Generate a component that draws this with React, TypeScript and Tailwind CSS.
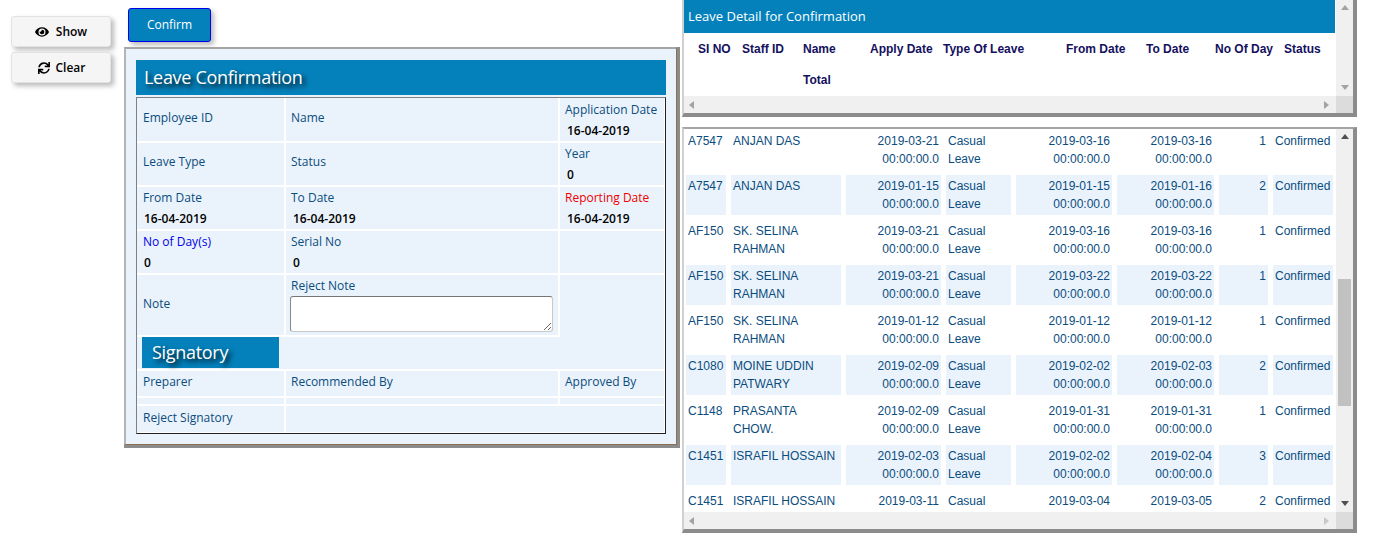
import { FaEye, FaSync } from "react-icons/fa";

const LEFT = "font-['Open_Sans','Noto_Sans',sans-serif]";
const INK = "text-[#0a4c7e]";

function Label({ children, className = INK }: { children: React.ReactNode; className?: string }) {
  return <div className={`h-[20px] leading-[20px] ${className}`}>{children}</div>;
}
function Value({ children, first }: { children: React.ReactNode; first?: boolean }) {
  return (
    <div className={`h-[20px] mt-[1px] leading-[20px] font-semibold text-black ${first ? "pl-[1px]" : "pl-[2px]"}`}>
      {children}
    </div>
  );
}
function Stack({ children, className = "" }: { children?: React.ReactNode; className?: string }) {
  return <div className={`bg-[#eaf3fb] pl-[5px] pt-[1px] ${className}`}>{children}</div>;
}
function Mid({ children, lift = "-mt-[3px]", className = "" }: { children: string; lift?: string; className?: string }) {
  return (
    <div className={`bg-[#eaf3fb] pl-[5px] flex items-center ${className}`}>
      <span className={`${lift} ${INK}`}>{children}</span>
    </div>
  );
}

function Arrow({ dir, color }: { dir: "up" | "down" | "left" | "right"; color: string }) {
  const pts = { up: "4,1 8,6 0,6", down: "0,1 8,1 4,6", left: "5,0 5,8 0,4", right: "0,0 0,8 5,4" }[dir];
  return (
    <svg width="8" height="8" viewBox="0 0 8 8" className="block">
      <polygon points={pts} fill={color} />
    </svg>
  );
}

function HScroll({ rightColor = "#a3a3a3" }: { rightColor?: string }) {
  return (
    <div className="flex h-[17px] bg-[#f0f0f0]">
      <div className="flex-1 flex items-center justify-between pl-[5px] pr-[4px]">
        <Arrow dir="left" color="#a3a3a3" />
        <Arrow dir="right" color={rightColor} />
      </div>
      <div className="w-[17px] bg-[#dcdcdc]" />
    </div>
  );
}

const rows = [
  ["A7547", "ANJAN DAS", "2019-03-21", "2019-03-16", "2019-03-16", "1"],
  ["A7547", "ANJAN DAS", "2019-01-15", "2019-01-15", "2019-01-16", "2"],
  ["AF150", "SK. SELINA\nRAHMAN", "2019-03-21", "2019-03-16", "2019-03-16", "1"],
  ["AF150", "SK. SELINA\nRAHMAN", "2019-03-21", "2019-03-22", "2019-03-22", "1"],
  ["AF150", "SK. SELINA\nRAHMAN", "2019-01-12", "2019-01-12", "2019-01-12", "1"],
  ["C1080", "MOINE UDDIN\nPATWARY", "2019-02-09", "2019-02-02", "2019-02-03", "2"],
  ["C1148", "PRASANTA\nCHOW.", "2019-02-09", "2019-01-31", "2019-01-31", "1"],
  ["C1451", "ISRAFIL HOSSAIN", "2019-02-03", "2019-02-02", "2019-02-04", "3"],
  ["C1451", "ISRAFIL HOSSAIN", "2019-03-11", "2019-03-04", "2019-03-05", "2"],
];

const headers = ["SI NO", "Staff ID", "Name", "Apply Date", "Type Of Leave", "From Date", "To Date", "No Of Day", "Status"];

const sideBtn =
  "w-[100px] h-[31px] flex items-center justify-center bg-[#f5f5f5] border border-[#e3e3e3] rounded-[3px] shadow-[3px_3px_5px_#bbbbbb] text-[12px] font-semibold text-black";

export default function App() {
  return (
    <div className="flex items-start w-[1379px] h-[546px] bg-white overflow-hidden">
      {/* Left action buttons */}
      <div className={`w-[124px] pl-[11px] pt-[16px] flex flex-col gap-[5px] ${LEFT}`}>
        <button className={`${sideBtn} gap-[7px]`}>
          <FaEye className="w-[14px] h-[14px]" />
          Show
        </button>
        <button className={`${sideBtn} gap-[5px]`}>
          <FaSync className="ml-[2px] w-[12px] h-[12px]" />
          Clear
        </button>
      </div>

      {/* Middle form */}
      <div className={`w-[556px] text-[12px] ${LEFT}`}>
        <button className="ml-[4px] mt-[8px] w-[83px] h-[34px] bg-[#0481bb] border border-[#0000ee] rounded-[3px] shadow-[3px_3px_5px_#bbbbbb] text-[12px] text-white block">
          Confirm
        </button>
        <div className="mt-[5px] w-[553px] h-[398px] bg-[#eaf3fb] border-l-2 border-t-2 border-l-[#b5b5b5] border-t-[#a5a5a5] border-r border-b border-r-[#8d6e50] border-b-[#8d6e50] shadow-[3px_3px_0_#8c8c8c,0_3px_0_#8c8c8c,3px_0_0_#8c8c8c] pl-[10px] pt-[11px]">
          <div className="w-[530px] h-[35px] bg-[#0481bb] flex items-center pl-[8px] text-[18px] tracking-[-0.3px] text-white [text-shadow:3px_3px_5px_#000000]">
            Leave Confirmation
          </div>
          <div className="mt-[2px] w-[530px] border border-t-[#808080] border-l-[#808080] border-r-[#222222] border-b-[#222222] bg-white pr-[1px] pb-[1px] grid grid-cols-[147px_272px_104px] grid-rows-[43px_42px_42px_42px_60px_32px_25px_6px_26px] gap-[2px]">
            <Mid className="!pl-[6px]">Employee ID</Mid>
            <Mid>Name</Mid>
            <Stack className="!pt-[2px]">
              <Label>Application Date</Label>
              <Value>16-04-2019</Value>
            </Stack>

            <Mid className="!pl-[6px]" lift="-mt-[5px]">Leave Type</Mid>
            <Mid lift="-mt-[5px]">Status</Mid>
            <Stack>
              <Label>Year</Label>
              <Value>0</Value>
            </Stack>

            <Stack className="!pl-[6px]">
              <Label>From Date</Label>
              <Value first>16-04-2019</Value>
            </Stack>
            <Stack>
              <Label>To Date</Label>
              <Value>16-04-2019</Value>
            </Stack>
            <Stack>
              <Label className="text-[#ee0000]">Reporting Date</Label>
              <Value>16-04-2019</Value>
            </Stack>

            <Stack className="!pl-[6px]">
              <Label className="text-[#0000ee]">No of Day(s)</Label>
              <Value first>0</Value>
            </Stack>
            <Stack>
              <Label>Serial No</Label>
              <Value>0</Value>
            </Stack>
            <Stack />

            <Mid className="!pl-[6px]">Note</Mid>
            <Stack className="!pl-[4px]">
              <div className="pl-[1px]">
                <Label>Reject Note</Label>
              </div>
              <textarea className="block w-[263px] h-[36px] bg-white border border-[#c8c8c8] border-t-[#767676] border-l-[#8a8a8a] rounded-[3px]" />
            </Stack>
            <div className="bg-[#eaf3fb] row-span-2" />

            <div className="bg-[#eaf3fb] pl-[5px] -mr-[2px]">
              <div className="w-[137px] h-[31px] bg-[#0481bb] flex items-center pl-[10px] text-[18px] tracking-[-0.3px] text-white [text-shadow:3px_3px_5px_#000000]">
                Signatory
              </div>
            </div>
            <div className="bg-[#eaf3fb] -mr-[2px]" />

            <Stack className="!pl-[6px]">
              <Label>Preparer</Label>
            </Stack>
            <Stack>
              <Label>Recommended By</Label>
            </Stack>
            <Stack>
              <Label>Approved By</Label>
            </Stack>

            <div className="bg-[#eaf3fb]" />
            <div className="bg-[#eaf3fb]" />
            <div className="bg-[#eaf3fb]" />

            <Stack className="!pl-[6px] !pt-[2px]">
              <Label>Reject Signatory</Label>
            </Stack>
            <div className="bg-[#eaf3fb] col-span-2" />
          </div>
        </div>
      </div>

      {/* Right panels */}
      <div className="ml-[2px] w-[675px] text-[12px] font-['Liberation_Sans',Arial,sans-serif]">
        <div className="h-[117px] border-l-2 border-l-[#d0d0d0] border-r-4 border-r-[#8c8c8c] border-b-4 border-b-[#8c8c8c] flex flex-col">
          <div className="flex h-[96px]">
            <div className="flex-1 min-w-0">
              <div className="h-[33px] mr-[1px] bg-[#0481bb] flex items-center pl-[4px] text-white text-[13px] font-medium font-['Open_Sans','Noto_Sans',sans-serif]">
                Leave Detail for Confirmation
              </div>
              <div className="pl-[14px] grid grid-cols-[44px_61px_67px_73px_123px_80px_69px_69px_60px] grid-rows-[31px_31px] items-center font-bold text-[#14105e]">
                {headers.map((h) => (
                  <div key={h} className="whitespace-nowrap">
                    {h}
                  </div>
                ))}
                <div className="col-start-3">Total</div>
              </div>
            </div>
            <div className="w-[17px] bg-[#f0f0f0] flex flex-col items-center justify-between py-[4px]">
              <Arrow dir="up" color="#a3a3a3" />
              <Arrow dir="down" color="#a3a3a3" />
            </div>
          </div>
          <HScroll />
        </div>

        <div className="mt-[10px] h-[406px] border-t-2 border-t-[#a5a5a5] border-l-2 border-l-[#d0d0d0] border-r-4 border-r-[#8c8c8c] border-b-4 border-b-[#8c8c8c] flex flex-col">
          <div className="flex h-[383px]">
            <div className="flex-1 min-w-0 overflow-hidden pl-[2px] pt-[1px]">
              <div className={`grid grid-cols-[40px_110px_95px_65px_96px_97px_49px_60px] auto-rows-[40px] gap-[5px] leading-[18px] ${INK}`}>
                {rows.map((r, i) => {
                  const bg = i % 2 === 1 ? "bg-[#eaf3fb]" : "bg-white";
                  const cell = `${bg} px-[2px] py-[2px]`;
                  return [
                    <div key={`${i}a`} className={cell}>{r[0]}</div>,
                    <div key={`${i}b`} className={`${cell} whitespace-pre-line`}>{r[1]}</div>,
                    <div key={`${i}c`} className={`${cell} text-right`}>{r[2]}<br />00:00:00.0</div>,
                    <div key={`${i}d`} className={cell}>Casual<br />Leave</div>,
                    <div key={`${i}e`} className={`${cell} text-right`}>{r[3]}<br />00:00:00.0</div>,
                    <div key={`${i}f`} className={`${cell} text-right`}>{r[4]}<br />00:00:00.0</div>,
                    <div key={`${i}g`} className={`${cell} text-right`}>{r[5]}</div>,
                    <div key={`${i}h`} className={cell}>Confirmed</div>,
                  ];
                })}
              </div>
            </div>
            <div className="w-[17px] bg-[#f0f0f0] flex flex-col items-center py-[4px]">
              <Arrow dir="up" color="#505050" />
              <div className="mt-[138px] w-[13px] h-[127px] bg-[#c1c1c1]" />
              <div className="mt-auto">
                <Arrow dir="down" color="#505050" />
              </div>
            </div>
          </div>
          <HScroll rightColor="#c8c8c8" />
        </div>
      </div>
    </div>
  );
}
